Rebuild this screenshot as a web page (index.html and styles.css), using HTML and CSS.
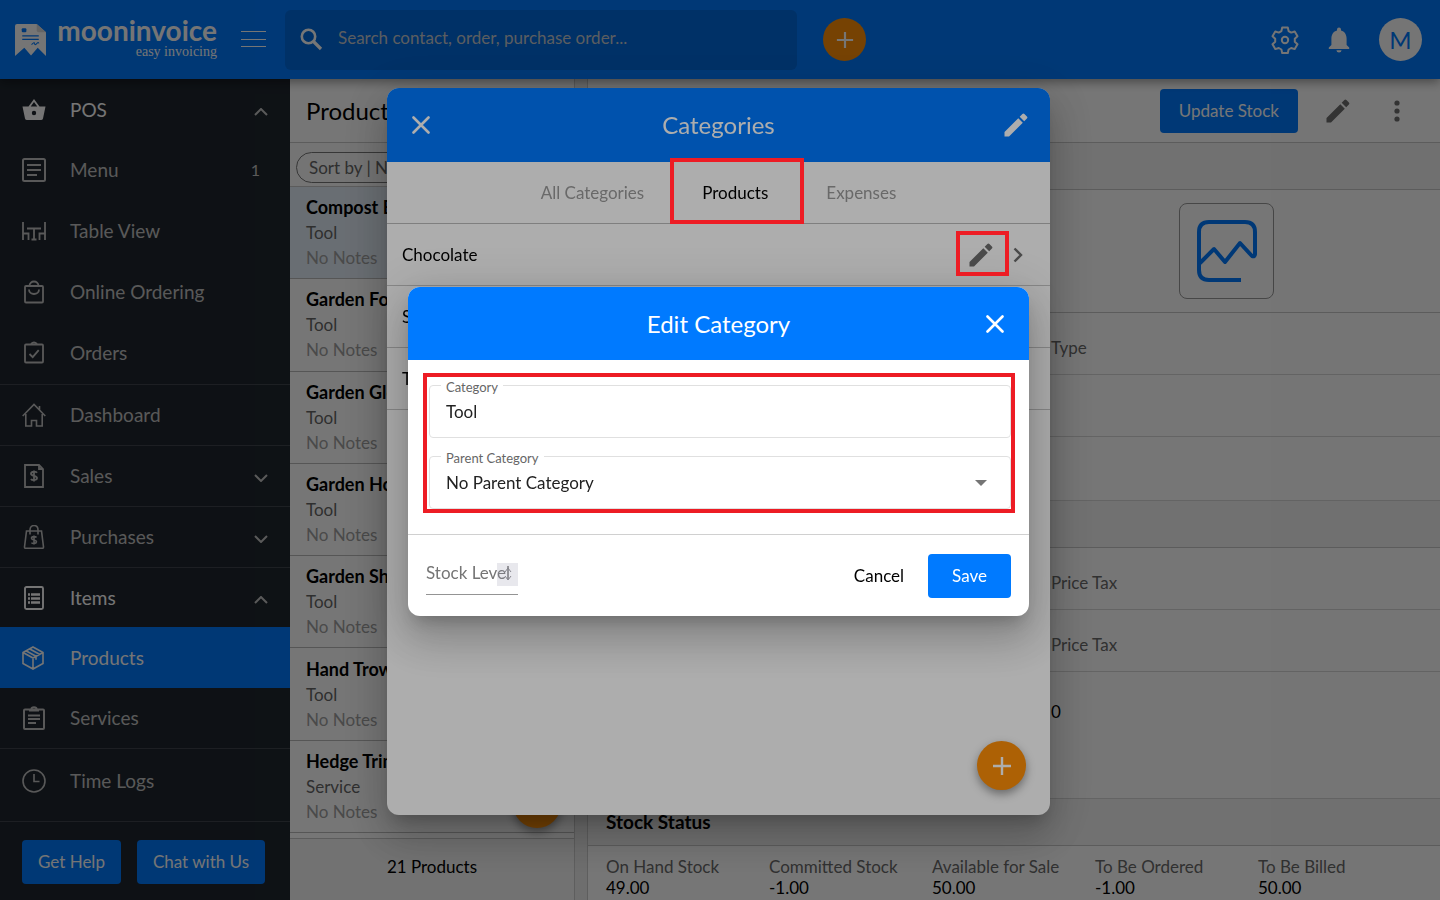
FILE: index.html
```html
<!DOCTYPE html>
<html lang="en">
<head>
<meta charset="utf-8">
<title>Moon Invoice - Edit Category</title>
<link rel="stylesheet" href="styles.css">
</head>
<body>
<svg class="defs" aria-hidden="true">
  <symbol id="pencil" viewBox="0 0 24 24"><path fill="currentColor" d="M0.5 19v4.500h4.500L18.800 9.700l-4.500-4.500zM22.900 5.600a1.400 1.400 0 0 0 0-2L20.400 1.100a1.400 1.400 0 0 0-2 0l-2.700 2.700 4.500 4.500z"/></symbol>
  <symbol id="plus" viewBox="0 0 20 20"><path d="M10 1v18M1 10h18" fill="none" stroke="currentColor" stroke-width="2.400"/></symbol>
  <symbol id="close" viewBox="0 0 18 18"><path d="M1.500 1.500l15 15M16.500 1.500l-15 15" fill="none" stroke="currentColor" stroke-width="2.600" stroke-linecap="round"/></symbol>
  <symbol id="up" viewBox="0 0 14 8"><path d="M1 7l6-6 6 6" fill="none" stroke="currentColor" stroke-width="2"/></symbol>
  <symbol id="down" viewBox="0 0 14 8"><path d="M1 1l6 6 6-6" fill="none" stroke="currentColor" stroke-width="2"/></symbol>
</svg>

<div class="app">
  <header class="topbar">
    <a class="brand" href="#">
      <svg class="brand-mark" viewBox="0 0 30 31"><path fill="#fff" d="M2 0h19l9 8v23l-8-8-6.500 7.500L9 23l-9 8V2a2 2 0 0 1 2-2z"/><path d="M21 0v6q0 2 2 2h7z" fill="#d9d9d9"/><rect x="6.500" y="4" width="4.500" height="4" rx="1" fill="#007aff"/><path d="M7 11.500h16M7 15h16" stroke="#007aff" stroke-width="1.200"/><path d="M16 20q3-3 3-1t2 0 2 0" stroke="#007aff" fill="none"/></svg>
      <span class="brand-text"><span class="brand-name">mooninvoice</span><span class="brand-tag">easy invoicing</span></span>
    </a>
    <button class="icon-btn burger" aria-label="Toggle menu"><svg width="25" height="17" viewBox="0 0 25 17"><path d="M0 .5h25M0 8.500h25M0 15.500h25" stroke="#fff" stroke-width="1.200"/></svg></button>
    <div class="search">
      <svg width="23" height="23" viewBox="0 0 23 23"><circle cx="8.500" cy="8.500" r="6.700" fill="none" stroke="#fff" stroke-width="2.600"/><path d="M13.500 13.500l7.500 7.500" stroke="#fff" stroke-width="3.200"/></svg>
      <input type="search" aria-label="Search" placeholder="Search contact, order, purchase order...">
    </div>
    <button class="fab fab-top" aria-label="Add"><svg width="18" height="18"><use href="#plus"/></svg></button>
    <div class="top-actions">
      <button class="icon-btn" aria-label="Settings"><svg width="28" height="28" viewBox="0 0 28 28" fill="none" stroke="#fff" stroke-width="2" stroke-linejoin="round"><path d="M11.200 1.500h5.600l.8 3.600 2.600 1.500 3.500-1.100 2.800 4.800-2.700 2.500v3l2.700 2.500-2.800 4.800-3.500-1.100-2.600 1.500-.8 3.600h-5.600l-.8-3.600-2.600-1.500-3.500 1.100-2.800-4.800 2.700-2.500v-3L1.500 10.300l2.800-4.800 3.500 1.100 2.600-1.500z"/><circle cx="14" cy="14" r="3.200"/></svg></button>
      <button class="icon-btn" aria-label="Notifications"><svg width="22" height="26" viewBox="0 0 22 26" fill="#fff"><path d="M11 25.500a2.600 2.600 0 0 0 2.600-2.300H8.400a2.600 2.600 0 0 0 2.600 2.300zM18.600 18v-6.500c0-4-2.100-7.100-5.600-8V2.400a2 2 0 0 0-4 0v1.100c-3.500.9-5.600 4-5.600 8V18L.8 20.500V22h20.400v-1.500z"/></svg></button>
      <button class="avatar" aria-label="Account">M</button>
    </div>
  </header>

  <div class="main">
    <aside class="sidebar">
      <nav class="nav">
        <div class="group">
          <a class="nav-item parent open" href="#"><svg viewBox="0 0 24 24"><path fill="currentColor" fill-rule="evenodd" d="M12 1l5.500 7.500h6L21 20.500q-.4 1.500-2 1.500H5q-1.600 0-2-1.500L.5 8.500h6zM12 4L8.700 8.500h6.600zM12 12.800a2.200 2.200 0 1 0 0 4.400 2.200 2.200 0 0 0 0-4.400z"/></svg><span>POS</span><svg class="chev"><use href="#up"/></svg></a>
          <a class="nav-item" href="#"><svg viewBox="0 0 24 24" fill="none" stroke="currentColor" stroke-width="2"><rect x="1" y="1" width="22" height="22" rx="1.500"/><path d="M5 7h14M5 12h14M5 17h10"/></svg><span>Menu</span><span class="count">1</span></a>
          <a class="nav-item" href="#"><svg viewBox="0 0 24 24" fill="none" stroke="currentColor" stroke-width="1.800"><path d="M1 3v18M1 14.500h5.500V21M23 3v18M23 14.500h-5.500V21M5 9.500h14M12 9.500V20M9.500 20.500h5"/></svg><span>Table View</span></a>
          <a class="nav-item" href="#"><svg viewBox="0 0 24 24" fill="none" stroke="currentColor" stroke-width="1.800"><rect x="3" y="6" width="18" height="16.500" rx="1"/><path d="M7.500 6c0-6 9-6 9 0M7 9.500c0 6 10 6 10 0"/></svg><span>Online Ordering</span></a>
          <a class="nav-item" href="#"><svg viewBox="0 0 24 24" fill="none" stroke="currentColor" stroke-width="1.800"><rect x="3" y="3.500" width="18" height="18" rx="1"/><path d="M9 3q3-3 6 0M7.500 13l3.200 3.200 6-7"/></svg><span>Orders</span></a>
        </div>
        <a class="nav-item ruled" href="#"><svg viewBox="0 0 24 24" fill="none" stroke="currentColor" stroke-width="1.600"><path d="M.7 13L12 1.500 23.300 13M3.800 11v12h5.700v-5.500h5V23h5.700V11M17.500 6.500V3"/></svg><span>Dashboard</span></a>
        <a class="nav-item ruled" href="#"><svg viewBox="0 0 24 24" fill="none" stroke="currentColor" stroke-width="1.800"><path d="M3 1h14l4 4v18H3zM17 1v4h4"/><path d="M15 8.800c-1-1.600-6-1.500-6 1s6 1.800 6 4.300-5 2.600-6 .9M12 6.500v11"/></svg><span>Sales</span><svg class="chev"><use href="#down"/></svg></a>
        <a class="nav-item ruled" href="#"><svg viewBox="0 0 24 24" fill="none" stroke="currentColor" stroke-width="1.600"><path d="M4.500 6h15L21.500 22q0 1.300-1 1.300h-17q-1 0-1-1.300zM8 9.500V5c0-6 8-6 8 0v4.500"/><path d="M14.500 12.500c-1-1.300-5-1.200-5 .8s5 1.500 5 3.500-4 2.200-5 .8M12 10.500v9"/></svg><span>Purchases</span><svg class="chev"><use href="#down"/></svg></a>
        <a class="nav-item parent open" href="#"><svg viewBox="0 0 24 24" fill="none" stroke="currentColor" stroke-width="1.900"><rect x="3" y="1" width="18" height="22" rx="1.500"/><path d="M9 8.500h9M9 12.500h9M9 16.500h9M6 8.500h2M6 12.500h2M6 16.500h2" stroke-width="2.400"/></svg><span>Items</span><svg class="chev"><use href="#up"/></svg></a>
        <a class="nav-item active" href="#"><svg viewBox="0 0 24 24" fill="none" stroke="currentColor" stroke-width="1.600"><path d="M11 1l10 5.500v11L11 23 1 17.500v-11zM1 6.500L11 12l10-5.500M11 12v11M4.300 5l9.700 5.300v3.500M7.800 3l9.700 5.300"/></svg><span>Products</span></a>
        <a class="nav-item ruled" href="#"><svg viewBox="0 0 24 24" fill="none" stroke="currentColor" stroke-width="2"><rect x="2" y="3.500" width="20" height="19.500" rx="1"/><path d="M7 4.500h10M6 9.500h12M6 13h12M6 17h8M9.500 3c0-2.500 5-2.500 5 0"/></svg><span>Services</span></a>
        <a class="nav-item last" href="#"><svg viewBox="0 0 24 24" fill="none" stroke="currentColor" stroke-width="1.600"><circle cx="12" cy="12" r="11"/><path d="M12 5v7.500h5.500"/></svg><span>Time Logs</span></a>
      </nav>
      <div class="side-foot"><button class="btn">Get Help</button><button class="btn">Chat with Us</button></div>
    </aside>

    <section class="list">
      <h1 class="pane-title">Products</h1>
      <div class="sort"><button class="chip">Sort by | Name</button></div>
      <ul class="rows">
        <li class="row selected"><b>Compost Bin</b><span>Tool</span><em>No Notes</em></li>
        <li class="row"><b>Garden Fork</b><span>Tool</span><em>No Notes</em></li>
        <li class="row"><b>Garden Gloves</b><span>Tool</span><em>No Notes</em></li>
        <li class="row"><b>Garden Hose</b><span>Tool</span><em>No Notes</em></li>
        <li class="row"><b>Garden Shears</b><span>Tool</span><em>No Notes</em></li>
        <li class="row"><b>Hand Trowel</b><span>Tool</span><em>No Notes</em></li>
        <li class="row"><b>Hedge Trimming</b><span>Service</span><em>No Notes</em></li>
      </ul>
      <p class="list-foot">21 Products</p>
      <button class="fab fab-list" aria-label="Add product"><svg width="18" height="18"><use href="#plus"/></svg></button>
    </section>

    <section class="detail">
      <div class="detail-head">
        <button class="btn">Update Stock</button>
        <button class="icon-btn dark" aria-label="Edit product"><svg width="24" height="24"><use href="#pencil"/></svg></button>
        <button class="icon-btn dark" aria-label="More"><svg width="6" height="22" viewBox="0 0 6 22" fill="currentColor"><circle cx="3" cy="3" r="2.600"/><circle cx="3" cy="11" r="2.600"/><circle cx="3" cy="19" r="2.600"/></svg></button>
      </div>
      <div class="band"></div>
      <div class="photo-row"><div class="photo"><svg width="60" height="62" viewBox="0 0 60 62" fill="none" stroke="#007aff" stroke-width="4"><path d="M44 60H12Q2 60 2 50V12Q2 2 12 2h36q10 0 10 10v22q0 3-3 2L43 23 28 42 17 29 3 43" stroke-linejoin="round"/></svg></div></div>
      <div class="line"><span>Type</span></div>
      <div class="line"></div>
      <div class="line tall"></div>
      <div class="band"></div>
      <div class="line"><span>Price Tax</span></div>
      <div class="line"><span>Price Tax</span></div>
      <div class="line grow"><span class="value">0</span></div>
      <h2 class="band">Stock Status</h2>
      <dl class="stats">
        <div><dt>On Hand Stock</dt><dd>49.00</dd></div>
        <div><dt>Committed Stock</dt><dd>-1.00</dd></div>
        <div><dt>Available for Sale</dt><dd>50.00</dd></div>
        <div><dt>To Be Ordered</dt><dd>-1.00</dd></div>
        <div><dt>To Be Billed</dt><dd>50.00</dd></div>
      </dl>
    </section>
  </div>
</div>

<div class="backdrop">
  <div class="modal categories" role="dialog" aria-label="Categories">
    <div class="modal-head">
      <button class="icon-btn" aria-label="Close categories"><svg width="18" height="18"><use href="#close"/></svg></button>
      <h2>Categories</h2>
      <button class="icon-btn" aria-label="Edit categories"><svg width="24" height="24"><use href="#pencil"/></svg></button>
    </div>
    <div class="tabs"><button>All Categories</button><button class="on">Products</button><button>Expenses</button></div>
    <ul class="cats">
      <li><span>Chocolate</span><button class="icon-btn dark" aria-label="Edit Chocolate"><svg width="24" height="24"><use href="#pencil"/></svg></button><svg class="next" width="10" height="16" viewBox="0 0 10 16"><path d="M1.500 1.500L8 8l-6.500 6.500" fill="none" stroke="currentColor" stroke-width="2.400"/></svg></li>
      <li><span>Service</span></li>
      <li><span>Tool</span></li>
    </ul>
    <button class="fab fab-modal" aria-label="Add category"><svg width="20" height="20"><use href="#plus"/></svg></button>
  </div>
</div>

<div class="backdrop">
  <form class="modal edit" role="dialog" aria-label="Edit Category">
    <div class="modal-head">
      <span></span>
      <h2>Edit Category</h2>
      <button type="button" class="icon-btn" aria-label="Close"><svg width="18" height="18"><use href="#close"/></svg></button>
    </div>
    <div class="edit-body">
      <div class="fields">
        <div class="field"><label for="category">Category</label><input id="category" type="text" value="Tool"></div>
        <div class="field"><label for="parent">Parent Category</label><select id="parent"><option>No Parent Category</option></select><svg class="caret" width="12" height="6" viewBox="0 0 12 6"><path d="M0 0h12L6 6z" fill="#757575"/></svg></div>
      </div>
    </div>
    <div class="edit-foot">
      <div class="stock"><input type="text" aria-label="Stock Level" placeholder="Stock Level"><span class="spinner"><svg width="8" height="14" viewBox="0 0 8 14" fill="none" stroke="#85858d"><path d="M1 5l3-4 3 4M1 9l3 4 3-4"/></svg></span></div>
      <button type="button" class="text-btn">Cancel</button>
      <button type="button" class="btn">Save</button>
    </div>
  </form>
</div>

<div class="backdrop callouts" aria-hidden="true">
  <div class="callout-area"><i class="callout callout-tab"></i><i class="callout callout-edit"></i></div>
</div>
</body>
</html>
```

FILE: styles.css
```css
* { box-sizing: border-box; }
body { margin: 0; font-family: Lato, "Open Sans", sans-serif; font-size: 17px; line-height: 24px; color: #000; }
button, input, select { font: inherit; color: inherit; margin: 0; }
button { background: none; border: 0; padding: 0; white-space: nowrap; }
h1, h2, p, ul, dl, dd { margin: 0; padding: 0; font-weight: 400; list-style: none; }
a { color: inherit; text-decoration: none; }
.defs { display: none; }

.app { height: 100vh; display: flex; flex-direction: column; overflow: hidden; isolation: isolate; }
.icon-btn { display: flex; align-items: center; justify-content: center; color: #fff; }
.dark { color: #6f6f6f; }
.btn { background: #007aff; color: #fff; height: 44px; padding: 0 19px; border-radius: 4px; }
.fab { display: flex; align-items: center; justify-content: center; width: 48px; height: 48px; border-radius: 50%; background: #ff8f08; color: #fff; box-shadow: 0 4px 10px rgba(0,0,0,.4); }

.topbar { height: 79px; flex: none; background: #007aff; display: flex; align-items: center; box-shadow: 0 3px 10px rgba(0,0,0,.4); position: relative; z-index: 1; padding: 0 18px 0 15px; }
.brand { display: flex; align-items: center; gap: 10px; color: #fff; width: 202px; }
.brand-mark { width: 31px; height: 32px; }
.brand-text { flex: 1; display: flex; flex-direction: column; align-items: flex-end; padding-bottom: 3px; }
.brand-name { font-weight: 700; font-size: 28px; line-height: 28px; }
.brand-tag { font-family: "Liberation Serif", serif; font-size: 14px; line-height: 16px; }
.burger { margin-left: 24px; }
.search { display: flex; align-items: center; gap: 15px; width: 512px; height: 60px; margin-left: 19px; padding: 0 15px; border-radius: 6px; background: #006ade; }
.search input { flex: 1; border: 0; background: none; outline: 0; padding: 0 0 4px; }
.search input::placeholder { color: #c4c9d0; opacity: 1; }
.fab-top { margin-left: 26px; width: 43px; height: 43px; box-shadow: none; }
.top-actions { margin-left: auto; display: flex; align-items: center; gap: 29px; }
.avatar { width: 43px; height: 43px; border-radius: 50%; background: #fff; color: #007aff; font-size: 24px; }

.main { flex: 1; display: flex; min-height: 0; background: #eee; }
.sidebar { width: 290px; flex: none; background: #20272f; color: #c2c2c2; display: flex; flex-direction: column; }
.nav { flex: 1; font-size: 19px; padding-top: 1px; }
.nav-item { display: flex; align-items: center; height: 61px; padding: 0 22px; gap: 24px; }
.nav-item > svg:first-child { width: 24px; height: 24px; }
.nav-item.parent { height: 59px; }
.nav-item.last { height: 64px; }
.nav-item.open { color: #fff; }
.nav-item .chev { width: 14px; height: 8px; margin: 4px 0 0 auto; color: #c2c2c2; }
.count { margin-left: auto; padding-right: 8px; font-size: 16px; }
.group { border-bottom: 1px solid #3f454c; padding-bottom: 1px; }
.ruled { border-bottom: 1px solid #3f454c; }
.active { background: #007aff; color: #fff; }
.side-foot { border-top: 1px solid #3f454c; height: 79px; display: flex; align-items: center; gap: 16px; padding: 2px 22px 0; }
.side-foot .btn { padding: 0 16px; }

.list { width: 285px; flex: none; display: flex; flex-direction: column; position: relative; background: #fff; border-right: 1px solid #ccc; }
.pane-title { height: 64px; line-height: 63px; padding-left: 16px; font-size: 24px; border-bottom: 1px solid #c8c8c8; }
.sort { height: 44px; display: flex; align-items: center; padding: 6px 6px 0; border-bottom: 1px solid #c8c8c8; background: #fafafa; }
.chip { height: 31px; padding: 0 12px; border: 1px solid #777; border-radius: 16px; color: #666; }
.rows { flex: 1; display: grid; grid-auto-rows: 1fr; }
.row { display: flex; flex-direction: column; justify-content: center; line-height: 25px; padding-left: 16px; border-bottom: 1px solid #bbb; }
.row b { font-size: 18px; }
.row span { color: #666; }
.row em { font-style: normal; color: #a0a0a0; }
.selected { background: #e4eef8; }
.list-foot { margin-top: 5px; height: 62px; line-height: 56px; text-align: center; background: #f6f6f6; border-top: 1px solid #c8c8c8; }
.fab-list { position: absolute; right: 13px; bottom: 72px; }

.detail { flex: 1; margin-left: 12px; border-left: 1px solid #ccc; display: flex; flex-direction: column; background: #fff; }
.detail-head { height: 64px; flex: none; display: flex; align-items: center; justify-content: flex-end; gap: 28px; padding-right: 40px; border-bottom: 1px solid #c8c8c8; }
.detail-head .icon-btn:last-child { margin-left: 16px; }
.band { height: 47px; line-height: 46px; flex: none; padding-left: 18px; background: #f5f5f5; border-bottom: 1px solid #c8c8c8; font-size: 19px; font-weight: 700; }
.photo-row { height: 123px; flex: none; display: flex; justify-content: flex-end; align-items: center; padding-right: 166px; border-bottom: 1px solid #c8c8c8; }
.photo { width: 95px; height: 96px; border: 1px solid #999; border-radius: 8px; display: flex; align-items: center; justify-content: center; }
.line { height: 62px; flex: none; display: flex; align-items: center; padding: 8px 0 0 463px; border-bottom: 1px solid #d8d8d8; color: #6a6a6a; }
.line.tall { height: 64px; }
.line.grow { height: auto; flex: 1; align-items: flex-start; padding-top: 28px; }
.value { color: #000; }
.stats { height: 54px; flex: none; display: flex; padding: 10px 0 0 18px; line-height: 21px; }
.stats div { width: 163px; }
.stats dt { color: #6a6a6a; }

.backdrop { position: fixed; inset: 0; display: flex; align-items: center; justify-content: center; padding: 3px 3px 0 0; background: rgba(0,0,0,.32); }
.modal { background: #fff; border-radius: 12px; overflow: hidden; display: flex; flex-direction: column; box-shadow: 0 11px 15px -7px rgba(0,0,0,.2), 0 24px 38px 3px rgba(0,0,0,.14), 0 9px 46px 8px rgba(0,0,0,.12); }
.modal-head { height: 74px; flex: none; background: #007aff; color: #fff; display: grid; grid-template-columns: 24px 1fr 24px; align-items: center; padding: 0 22px; }
.modal-head h2 { text-align: center; font-size: 24px; line-height: 30px; }
.categories, .callout-area { width: 663px; height: calc(100vh - 173px); position: relative; }
.tabs { height: 62px; flex: none; display: flex; justify-content: center; gap: 58px; border-bottom: 1px solid #bbb; color: #9b9b9b; }
.tabs .on { color: #000; }
.cats li { height: 62px; display: flex; align-items: center; gap: 20px; padding: 0 27px 0 15px; border-bottom: 1px solid #c8c8c8; }
.cats span { flex: 1; }
.next { color: #6f6f6f; }
.fab-modal { position: absolute; right: 24px; bottom: 25px; width: 49px; height: 49px; }

.edit { width: 621px; }
.edit .modal-head { height: 73px; }
.edit-body { padding: 13px 14px 21px 15px; border-bottom: 1px solid #d0d0d0; }
.fields { border: 4px solid #ed1c24; padding: 8px 0 0 2px; display: flex; flex-direction: column; gap: 18px; }
.field { position: relative; height: 53px; border: 1px solid #e0e0e0; border-radius: 4px; }
.field label { position: absolute; left: 11px; top: -9px; padding: 0 5px; background: #fff; color: #666; font-size: 13px; line-height: 20px; }
.field input, .field select { width: 100%; height: 100%; border: 0; outline: 0; background: none; appearance: none; padding: 0 16px; color: #222; }
.caret { position: absolute; right: 23px; top: 23px; }
.edit-foot { height: 81px; display: flex; align-items: center; padding: 0 18px; }
.stock { position: relative; width: 92px; height: 42px; margin: 0 auto 4px 0; border-bottom: 1px solid #949494; }
.stock input { width: 100%; height: 40px; border: 0; outline: 0; padding: 0; background: none; }
.stock input::placeholder { color: #757575; opacity: 1; }
.spinner { position: absolute; right: 0; top: 10px; width: 21px; height: 23px; display: flex; align-items: center; justify-content: center; background: rgba(150,150,175,.22); }
.text-btn { margin-right: 24px; }
.edit-foot .btn { padding: 0 24px; }

.callouts { background: none; pointer-events: none; }
.callout { position: absolute; border: 4px solid #ed1c24; }
.callout-tab { left: 283px; top: 70px; width: 134px; height: 66px; }
.callout-edit { left: 569px; top: 143px; width: 53px; height: 45px; }
```
